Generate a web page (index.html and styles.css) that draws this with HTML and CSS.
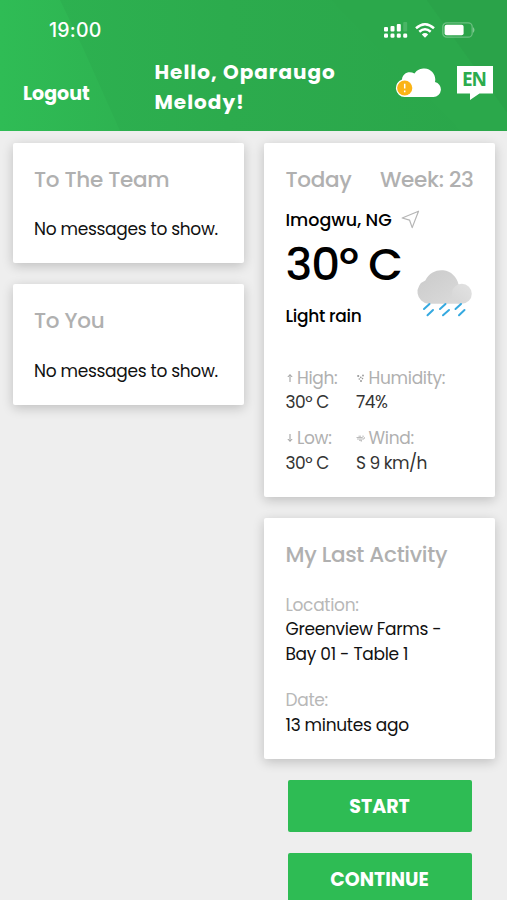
FILE: index.html
```html
<!DOCTYPE html>
<html lang="en">
<head>
  <meta charset="UTF-8">
  <meta name="viewport" content="width=device-width, initial-scale=1">
  <title>Dashboard</title>
  <link rel="stylesheet" href="styles.css">
</head>
<body>
  <header class="header">
    <svg class="header-bg" viewBox="0 0 507 131" preserveAspectRatio="none">
      <defs>
        <linearGradient id="base" x1="0" x2="1">
          <stop offset="0" stop-color="#2db351"/>
          <stop offset="0.45" stop-color="#2cab4d"/>
          <stop offset="1" stop-color="#2aa64a"/>
        </linearGradient>
        <linearGradient id="light" x1="0" x2="1">
          <stop offset="0" stop-color="#2fbc55"/>
          <stop offset="1" stop-color="#2eb351"/>
        </linearGradient>
      </defs>
      <rect width="507" height="131" fill="url(#base)"/>
      <path d="M0 0H60L83 48L120 131H0Z" fill="url(#light)"/>
      <path d="M332 0H427L507 112V131H460Z" fill="#2ba84b"/>
      <path d="M427 0H507V112Z" fill="#2aa349"/>
    </svg>

    <!-- Status bar -->
    <div class="status-bar">
      <span class="time">19:00</span>
      <div class="status-icons">
        <svg width="24" height="16" viewBox="0 0 24 16" fill="#fff">
          <rect x="0" y="5" width="4" height="4.500" rx="1"/>
          <rect x="6.500" y="4" width="4" height="5.500" rx="1"/>
          <rect x="12.800" y="2" width="4" height="7.500" rx="1"/>
          <rect x="19.200" y="0" width="4" height="9.500" rx="1" opacity=".15"/>
          <rect x="0" y="11.500" width="4" height="4.200" rx="1.300"/>
          <rect x="6.500" y="11.500" width="4" height="4.200" rx="1.300"/>
          <rect x="12.800" y="11.500" width="4" height="4.200" rx="1.300"/>
          <rect x="19.200" y="11.500" width="4" height="4.200" rx="1.300"/>
        </svg>
        <svg width="20" height="15" viewBox="0 0 20 15" fill="none" stroke="#fff" stroke-width="2.500">
          <path d="M1 5.300Q10 -2.700 19 5.300"/>
          <path d="M4.300 8.700Q10 3.700 15.700 8.700"/>
          <path d="M10 14.700L6.800 11.400Q10 8.800 13.200 11.400Z" fill="#fff" stroke="none"/>
        </svg>
        <svg width="33" height="16" viewBox="0 0 33 16">
          <rect x=".8" y=".8" width="29.400" height="14.400" rx="4" fill="none" stroke="#fff" stroke-opacity=".3" stroke-width="1.300"/>
          <rect x="2.600" y="2.700" width="19" height="10.600" rx="2" fill="#fff"/>
          <path d="M31 5Q34 8 31 11Z" fill="#fff" opacity=".4"/>
        </svg>
      </div>
    </div>

    <div class="nav">
      <a class="logout">Logout</a>
      <h1 class="greeting">Hello, Oparaugo<br>Melody!</h1>
      <svg class="cloud" width="46" height="30" viewBox="0 0 46 30">
        <path d="M9.500 29A9 9 0 0 1 7 11.500C7.500 5 14 2.500 19.500 5.500C22 1.500 26 0.500 29.500 0.500C37 1 41.500 7.500 40 14A7.600 7.600 0 0 1 38.500 29Z" fill="#fff"/>
        <circle cx="9.700" cy="20" r="7.600" fill="#fbb416"/>
        <path d="M9.700 15.800V20.500M9.700 22.600V24.200" stroke="#fff" stroke-width="1.500"/>
      </svg>
      <div class="lang">
        <svg width="36" height="34" viewBox="0 0 36 34"><path d="M0 0H36V27.500H22.500L13 34V27.500H0Z" fill="#fff"/></svg>
        <span class="lang-code">EN</span>
      </div>
    </div>
  </header>

  <main class="board">
    <div class="column">
      <section class="card">
        <h2 class="title">To The Team</h2>
        <p class="message">No messages to show.</p>
      </section>
      <section class="card">
        <h2 class="title">To You</h2>
        <p class="message">No messages to show.</p>
      </section>
    </div>

    <div class="column">
      <!-- Weather -->
      <section class="card weather">
        <div class="weather-head">
          <h2 class="title">Today</h2>
          <h2 class="title">Week: 23</h2>
        </div>
        <div class="place">
          <span>Imogwu, NG</span>
          <svg width="19" height="19" viewBox="0 0 19 19" fill="none" stroke="#b5b5b5" stroke-width="1.200" stroke-linejoin="round"><path d="M17.500 1.200L1.200 8L8.600 10.200L11.200 17.600Z"/></svg>
        </div>
        <div class="now">
          <div>
            <div class="temp">30º C</div>
            <div class="sky">Light rain</div>
          </div>
          <svg class="rain" width="56" height="50" viewBox="0 0 56 50">
            <defs>
              <linearGradient id="cloud" x1="0" y1="0" x2="1" y2="1">
                <stop offset="0" stop-color="#cacaca"/>
                <stop offset="1" stop-color="#dcdcdc"/>
              </linearGradient>
              <linearGradient id="puff" x1="0" y1="1" x2="1" y2="0">
                <stop offset="0" stop-color="#d6d6d6"/>
                <stop offset="1" stop-color="#e2e2e2"/>
              </linearGradient>
            </defs>
            <path d="M12.500 35.800A12 12 0 0 1 9.300 12.600A17.500 17.500 0 0 1 42.500 16.500A10 10 0 0 1 45.500 35.800Z" fill="url(#cloud)"/>
            <circle cx="45.800" cy="25.800" r="10" fill="url(#puff)"/>
            <g stroke="#35a9e0" stroke-width="2" stroke-linecap="round">
              <path d="M8 41L13.500 36M11.500 47.300L17 42M24 41L29.500 36M27 47.300L33 42M39.500 41L45 36M43 47.300L48.500 42"/>
            </g>
          </svg>
        </div>
        <dl class="stats">
          <div>
            <dt><svg width="8" height="10" viewBox="0 0 8 10" fill="none" stroke="#999"><path d="M4 9V1.800M1.800 4L4 1.600L6.200 4"/></svg><span>High:</span></dt>
            <dd>30º C</dd>
          </div>
          <div>
            <dt><svg width="9" height="10" viewBox="0 0 9 10" fill="#999"><circle cx="2.200" cy="3" r="1.100"/><circle cx="4.800" cy="4.400" r=".8"/><circle cx="7" cy="2.500" r=".9"/><circle cx="3.300" cy="6" r=".8"/><circle cx="5" cy="8" r="1"/><circle cx="6.500" cy="5.600" r=".8"/></svg><span>Humidity:</span></dt>
            <dd>74%</dd>
          </div>
          <div>
            <dt><svg width="8" height="10" viewBox="0 0 8 10" fill="none" stroke="#999"><path d="M4 1V8.200M1.800 6L4 8.400L6.200 6"/></svg><span>Low:</span></dt>
            <dd>30º C</dd>
          </div>
          <div>
            <dt><svg width="9" height="10" viewBox="0 0 9 10" fill="none" stroke="#aaa" stroke-width=".8"><path d="M.5 4.500H6Q8 4 7 2.500M1 6H8Q9 4.500 8 4M3 7.300H5.500Q6 8.500 4.800 8.500M2.500 3.200H5"/></svg><span>Wind:</span></dt>
            <dd>S 9 km/h</dd>
          </div>
        </dl>
      </section>

      <!-- Last activity -->
      <section class="card activity">
        <h2 class="title">My Last Activity</h2>
        <div class="entry">
          <p class="label">Location:</p>
          <p class="value">Greenview Farms -<br>Bay 01 - Table 1</p>
        </div>
        <div class="entry">
          <p class="label">Date:</p>
          <p class="value">13 minutes ago</p>
        </div>
      </section>

      <button class="btn">START</button>
      <button class="btn">CONTINUE</button>
    </div>
  </main>
</body>
</html>
```
FILE: styles.css
```css
* {
  margin: 0;
  padding: 0;
  box-sizing: border-box;
}
body {
  height: 900px;
  overflow: hidden;
  font-family: 'Poppins', 'Inter', sans-serif;
  font-size: 17px;
  line-height: 24.8px;
  letter-spacing: -0.3px;
  color: #111;
  background: #eeeeee;
}
svg {
  display: block;
  flex: none;
}

/* Header */
.header {
  position: relative;
  height: 131px;
  color: #fff;
  letter-spacing: 0;
}
.header-bg {
  position: absolute;
  width: 100%;
  height: 100%;
  z-index: -1;
}
.status-bar {
  display: flex;
  justify-content: space-between;
  align-items: center;
  height: 57px;
  padding: 3px 32px 0 49px;
}
.time {
  font-family: 'Inter', sans-serif;
  font-size: 19.5px;
  font-weight: 500;
  letter-spacing: 0.2px;
}
.status-icons {
  display: flex;
  align-items: center;
  gap: 7px;
}
.nav {
  display: flex;
  align-items: flex-start;
  padding-right: 14px;
}
.logout {
  width: 154.5px;
  padding: 25px 0 0 23px;
  font-size: 19px;
  font-weight: 700;
}
.greeting {
  width: 240px;
  font-size: 20px;
  line-height: 30.2px;
  font-weight: 700;
  letter-spacing: 1px;
  white-space: nowrap;
}
.cloud {
  margin-top: 11px;
}
.lang {
  position: relative;
  margin: 9px 0 0 16.5px;
}
.lang-code {
  position: absolute;
  top: 0;
  left: 0;
  width: 34px;
  line-height: 27px;
  text-align: center;
  font-family: 'Open Sans', sans-serif;
  font-size: 19px;
  font-weight: 700;
  letter-spacing: -1px;
  color: #2cab4d;
}

/* Cards */
.board {
  display: grid;
  grid-template-columns: 231px 231px;
  gap: 20.5px;
  padding: 11.5px 12.5px 0;
}
.column {
  display: flex;
  flex-direction: column;
  gap: 21px;
}
.card {
  height: 120.5px;
  padding: 20px 21.5px;
  background: #fff;
  border-radius: 2px;
  box-shadow: 0 3px 12px rgba(0, 0, 0, 0.2);
  white-space: nowrap;
}
.title {
  font-size: 21.5px;
  line-height: 33px;
  font-weight: 500;
  color: #b0b0b0;
}
.message {
  margin-top: 21.5px;
}

/* Weather */
.weather {
  height: 354.5px;
}
.weather-head {
  display: flex;
  justify-content: space-between;
}
.place {
  display: flex;
  align-items: center;
  gap: 9px;
  margin-top: 12px;
  font-size: 17.5px;
  font-weight: 500;
  letter-spacing: 0;
  color: #000;
}
.now {
  display: flex;
  justify-content: space-between;
  color: #000;
}
.temp {
  font-size: 45px;
  line-height: 66px;
  font-weight: 500;
  letter-spacing: -1.1px;
}
.sky {
  margin-top: 6px;
  font-weight: 500;
}
.rain {
  margin: 36px 1.5px 0 0;
}
.stats {
  display: grid;
  grid-template-columns: 70.5px auto;
  row-gap: 10.8px;
  margin-top: 36.5px;
}
.stats dt {
  display: flex;
  align-items: center;
  gap: 3.5px;
  color: #b0b0b0;
}
.stats dd {
  color: #333;
  letter-spacing: -0.5px;
}

/* Last activity */
.activity {
  height: 241px;
}
.entry {
  margin-top: 21.5px;
}
.label {
  color: #b8b8b8;
}

.btn {
  align-self: center;
  width: 184px;
  height: 52px;
  border: none;
  border-radius: 2px;
  background: #2ebc54;
  color: #fff;
  font-family: inherit;
  font-size: 19px;
  font-weight: 700;
}
```
